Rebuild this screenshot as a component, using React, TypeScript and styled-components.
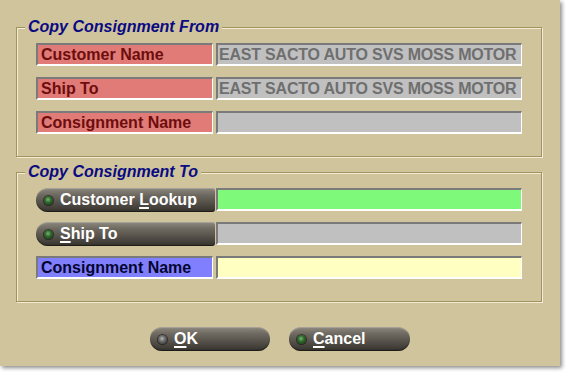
import styled, { createGlobalStyle } from 'styled-components';

const GlobalStyle = createGlobalStyle`
  html, body {
    margin: 0;
    padding: 0;
    background: #ffffff;
  }
  body {
    font-family: "Liberation Sans", Arial, sans-serif;
  }
`;

const Page = styled.div`
  width: 566px;
  height: 372px;
  overflow: hidden;
`;

const Dialog = styled.div`
  box-sizing: border-box;
  width: 560px;
  height: 366px;
  background: #cfc49b;
  box-shadow: 2px 2px 4px rgba(0, 0, 0, 0.45);
  padding: 27px 0 0 16px;
  display: flex;
  flex-direction: column;
`;

const Group = styled.div<{ $gap?: number }>`
  box-sizing: border-box;
  width: 526px;
  margin-top: ${p => p.$gap ?? 0}px;
  border: 1px solid #a1935f;
  box-shadow: inset 1px 1px 0 #f3edd6, 1px 1px 0 #f3edd6;
  padding: 0 19px 22px 19px;
  display: flex;
  flex-direction: column;
  gap: 11px;
`;

const Legend = styled.div`
  align-self: flex-start;
  margin: -9px 0 -3px -11px;
  padding: 0 3px;
  height: 16px;
  line-height: 16px;
  background: #cfc49b;
  color: #0a0a82;
  font-size: 16px;
  font-weight: bold;
  font-style: italic;
`;

const Row = styled.div`
  display: grid;
  grid-template-columns: 177px 306px;
  column-gap: 3px;
  height: 23px;
`;

const Sunken = styled.div`
  box-sizing: border-box;
  height: 23px;
  border-style: solid;
  border-width: 2px 1px 2px 2px;
  border-color: #7a7a7a #ffffff #ffffff #7a7a7a;
  font-size: 16px;
  font-weight: bold;
  line-height: 19px;
  white-space: nowrap;
  overflow: hidden;
`;

const Label = styled(Sunken)<{ $tone: 'red' | 'blue' }>`
  padding-left: 3px;
  background: ${p => (p.$tone === 'red' ? '#e07b77' : '#8080ff')};
  color: ${p => (p.$tone === 'red' ? '#6e0d0d' : '#050530')};
`;

const Field = styled(Sunken)<{ $fill: string }>`
  padding-left: 1px;
  background: ${p => p.$fill};
  color: #6f6f6f;
  letter-spacing: -0.2px;
`;

const Pill = styled.button<{ $round?: boolean; $w?: number }>`
  box-sizing: border-box;
  width: ${p => (p.$w ? `${p.$w}px` : 'calc(100% + 2px)')};
  height: 24px;
  margin: 0;
  padding: 0 0 0 8px;
  border: none;
  border-radius: ${p => (p.$round ? '12px' : '12px 3px 3px 12px')};
  background: linear-gradient(to bottom, #8e897f 0%, #6d685f 30%, #524e47 65%, #35312c 100%);
  box-shadow: inset 0 -1px 1px rgba(0, 0, 0, 0.5), inset 0 1px 1px rgba(255, 255, 255, 0.25);
  display: flex;
  align-items: center;
  gap: 7px;
  color: #ffffff;
  font-family: "Liberation Sans", Arial, sans-serif;
  font-size: 16px;
  font-weight: bold;
  white-space: nowrap;
  cursor: pointer;

  u {
    text-decoration-thickness: 2px;
    text-underline-offset: 2px;
  }
`;

const Led = styled.span<{ $on?: boolean }>`
  flex: none;
  width: 9px;
  height: 9px;
  border-radius: 50%;
  background: ${p =>
    p.$on
      ? 'radial-gradient(circle at 45% 40%, #7fb27a 0%, #2f6a2c 40%, #0f2d10 100%)'
      : 'radial-gradient(circle at 45% 40%, #b8b8b8 0%, #6a6a6a 40%, #2a2a2a 100%)'};
  box-shadow: 0 0 0 1px rgba(20, 20, 15, 0.6);
`;

const Buttons = styled.div`
  display: flex;
  justify-content: center;
  gap: 19px;
  margin-top: 25px;
  padding-right: 16px;
`;

const sourceName = 'EAST SACTO AUTO SVS MOSS MOTOR';

export default function App() {
  return (
    <Page>
      <GlobalStyle />
      <Dialog>
        <Group>
          <Legend>Copy Consignment From</Legend>
          <Row>
            <Label $tone="red">Customer Name</Label>
            <Field $fill="#c0c0c0">{sourceName}</Field>
          </Row>
          <Row>
            <Label $tone="red">Ship To</Label>
            <Field $fill="#c0c0c0">{sourceName}</Field>
          </Row>
          <Row>
            <Label $tone="red">Consignment Name</Label>
            <Field $fill="#c0c0c0" />
          </Row>
        </Group>

        <Group $gap={15}>
          <Legend>Copy Consignment To</Legend>
          <Row>
            <Pill>
              <Led $on />
              <span>Customer <u>L</u>ookup</span>
            </Pill>
            <Field $fill="#7ef97a" />
          </Row>
          <Row>
            <Pill>
              <Led $on />
              <span><u>S</u>hip To</span>
            </Pill>
            <Field $fill="#c0c0c0" />
          </Row>
          <Row>
            <Label $tone="blue">Consignment Name</Label>
            <Field $fill="#ffffc2" />
          </Row>
        </Group>

        <Buttons>
          <Pill $round $w={120}>
            <Led />
            <span><u>O</u>K</span>
          </Pill>
          <Pill $round $w={121}>
            <Led $on />
            <span><u>C</u>ancel</span>
          </Pill>
        </Buttons>
      </Dialog>
    </Page>
  );
}
